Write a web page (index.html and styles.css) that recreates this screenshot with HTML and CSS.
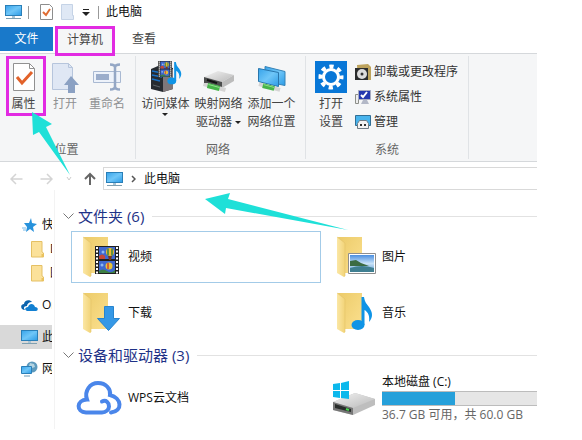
FILE: index.html
```html
<!DOCTYPE html>
<html lang="zh-CN">
<head>
<meta charset="utf-8">
<title>此电脑</title>
<link rel="stylesheet" href="styles.css">
</head>
<body>
<svg class="defs" width="0" height="0" aria-hidden="true">
  <defs>
    <linearGradient id="screen" x1="0" y1="0" x2="1" y2="1"><stop offset="0" stop-color="#36a3ea"/><stop offset=".5" stop-color="#6fc6f8"/><stop offset="1" stop-color="#2b9be6"/></linearGradient>
    <linearGradient id="back" x1="0" y1="0" x2="1" y2="1"><stop offset="0" stop-color="#eccb69"/><stop offset="1" stop-color="#fbe08f"/></linearGradient>
    <linearGradient id="flap" x1="0" y1="0" x2="1" y2="0"><stop offset="0" stop-color="#fbe7a5"/><stop offset="1" stop-color="#f2d377"/></linearGradient>
    <linearGradient id="metal" x1="0" y1="0" x2="1" y2="1"><stop offset="0" stop-color="#f3f3f3"/><stop offset="1" stop-color="#b9b9b9"/></linearGradient>
    <linearGradient id="sky" x1="0" y1="0" x2="0" y2="1"><stop offset="0" stop-color="#4b8fe0"/><stop offset=".5" stop-color="#c8e2f8"/><stop offset="1" stop-color="#5d9bd0"/></linearGradient>
  </defs>
  <symbol id="monitor" viewBox="0 0 17 16">
    <rect x=".5" y="1.5" width="16" height="10" fill="url(#screen)" stroke="#2a7fb8"/>
    <path d="M7 12h3v2H7z" fill="#a8c4d4"/><path d="M1 14.5h15" stroke="#7f9fb0"/>
  </symbol>
  <symbol id="folder" viewBox="0 0 40 44">
    <path d="M1 2h24v36H8z" fill="url(#back)"/>
    <path d="M0 2l8 6v33.500l-1 .5-7-4z" fill="url(#flap)"/><path d="M0 2l8 6v33" fill="none" stroke="#e3c269" stroke-width=".6"/>
  </symbol>
  <symbol id="minifolder" viewBox="0 0 14 17">
    <path d="M.5.500h10.500V11l1.500 1v4H.5z" fill="#fbe19a" stroke="#e5c064"/><path d="M10.500 13h2v3h-2z" fill="#eac25d"/>
  </symbol>
  <symbol id="film" viewBox="0 0 24 28">
    <path d="M0 0h24v28H0z" fill="#202020"/>
    <path d="M2 1v27M22 1v27" stroke="#fff" stroke-width="2" stroke-dasharray="2 1.500"/>
    <path d="M4 1h16v12H4zM4 15h16v12H4z" fill="#4068cf"/>
    <path d="M4 10q3-3 6 0v3H4z" fill="#c54838"/><path d="M4 25q4-3 8 0t8-1v3H4z" fill="#3d7f43"/>
    <circle cx="15" cy="6" r="4" fill="#f0b92e"/><path d="M13 2.500v7M17 2.500v7" stroke="#358447" stroke-width="1.500"/><path d="M13 10h4l-1 4h-2z" fill="#753820"/>
    <circle cx="14" cy="20" r="3.500" fill="#e9c438"/><path d="M13 17v6" stroke="#d04132" stroke-width="1.500"/><circle cx="8" cy="6" r="1.500" fill="#8fb8f0"/><circle cx="7" cy="19" r="1.500" fill="#8fb8f0"/>
  </symbol>
  <symbol id="note" viewBox="0 0 22 34">
    <ellipse cx="7" cy="28" rx="6.500" ry="5" fill="#0f94e6"/>
    <path d="M10.500 0h2.500c1 6 3 7 5 10 4 6 4 10 0 15 1-6-1-10-4.500-12v15h-3z" fill="#0f94e6"/>
  </symbol>
  <symbol id="cable" viewBox="0 0 24 9">
    <path d="M1 1l22 6" stroke="#d4d4d4" stroke-width="4"/><path d="M5 2.500l12 3" stroke="#46b449" stroke-width="5"/><path d="M6 1.500l11 3" stroke="#91df8d"/>
  </symbol>
</svg>

<div class="window">
  <header class="titlebar">
    <svg class="t-pc" width="17" height="16"><use href="#monitor"/></svg>
    <span class="rule"></span>
    <button class="quick" aria-label="属性"><svg width="13" height="16" viewBox="0 0 13 16"><path d="M.5.500h9l3 3v12H.5z" fill="#fff" stroke="#8d8d8d"/><path d="M3 8l3 3 4-6" fill="none" stroke="#e06d33" stroke-width="2"/></svg></button>
    <button class="quick" aria-label="新建文件夹"><svg width="13" height="16" viewBox="0 0 13 16"><path d="M.5.500h11v11h1v4H.5z" fill="#dfe8f5" stroke="#c5d3e6"/></svg></button>
    <button class="quick" aria-label="自定义快速访问工具栏"><svg width="8" height="8" viewBox="0 0 8 8"><path d="M1 1.500h6" stroke="#222"/><path d="M0 4h8L4 8z" fill="#222"/></svg></button>
    <span class="rule"></span>
    <span class="title">此电脑</span>
  </header>

  <nav class="tabs">
    <button class="tab file">文件</button>
    <button class="tab current">计算机</button>
    <button class="tab">查看</button>
  </nav>

  <section class="ribbon">
    <div class="group place">
      <div class="tools">
        <button class="tool marked"><svg width="22" height="32" viewBox="0 0 22 32"><path d="M.5 2.500h16l5 5v22H.5z" fill="#fff" stroke="#919191"/><path d="M16.500 2.500v5h5" fill="none" stroke="#919191"/><path d="M4 16l5 6 10-11" fill="none" stroke="#e2622a" stroke-width="3"/></svg><span>属性</span></button>
        <button class="tool off"><svg width="28" height="32" viewBox="0 0 28 32"><path d="M1.500 2.500h16l4 4v22h-20z" fill="#dfe7f4" stroke="#b6c5dc"/><path d="M17.500 2.500v4h4" fill="none" stroke="#b6c5dc"/><path d="M20 15l8 9h-4v8h-7v-8h-4z" fill="#8ba1c3"/></svg><span>打开</span></button>
        <button class="tool off"><svg width="28" height="32" viewBox="0 0 28 32"><path d="M.5 10.500h27v11H.5z" fill="#edf2fa" stroke="#a9b9d2"/><path d="M3 13h13v6H3z" fill="#9badcb"/><path d="M17 3.500q5 0 5 3v19q0 3-5 3M27 3.500q-5 0-5 3M22 25.500q0 3 5 3" fill="none" stroke="#94a7c5" stroke-width="2.500"/></svg><span>重命名</span></button>
      </div>
      <div class="caption">位置</div>
    </div>
    <div class="group network">
      <div class="tools">
        <button class="tool"><svg width="32" height="32" viewBox="0 0 32 32"><path d="M1 8l7-3 15 2v21l-10 3-12-3z" fill="#262b31"/><path d="M13 11l10-3v20l-10 3z" fill="#7d777a"/><path d="M2 10l10 2M2 14l10 2M2 18l8 2" stroke="#1970c5" stroke-width="1.500"/><path d="M3 24l7 2" stroke="#5c646b"/><use href="#film" x="7" y="0" width="16" height="16"/><use href="#note" x="17" y="1" width="15" height="23"/></svg><span>访问媒体<i class="drop"></i></span></button>
        <button class="tool"><svg width="34" height="32" viewBox="0 0 34 32"><path d="M2 16L16 10l16 4-12 7z" fill="url(#metal)"/><path d="M2 16l18 5v6L2 22z" fill="#4b4d4d"/><path d="M20 21l12-7v6l-12 7z" fill="#bcbcbc"/><path d="M5 19l10 3" stroke="#111" stroke-width="2"/><use href="#cable" x="0" y="22" width="25" height="9"/></svg><span>映射网络<br>驱动器 <i class="drop"></i></span></button>
        <button class="tool"><svg width="30" height="32" viewBox="0 0 30 32"><path d="M8 5.500l20 5v14l-20-4z" fill="url(#screen)" stroke="#3683b7"/><path d="M1.500 7.500l20 4v14l-20-5z" fill="url(#screen)" stroke="#2876ad"/><use href="#cable" x="1" y="22" width="23" height="9"/></svg><span>添加一个<br>网络位置</span></button>
      </div>
      <div class="caption">网络</div>
    </div>
    <div class="group system">
      <div class="tools">
        <button class="tool"><svg width="32" height="32" viewBox="0 0 32 32"><path d="M0 0h32v32H0z" fill="#0877d7"/><circle cx="16" cy="16" r="7.500" fill="none" stroke="#fff" stroke-width="3"/><circle cx="16" cy="16" r="10.500" fill="none" stroke="#fff" stroke-width="4" stroke-dasharray="4.250 4" stroke-dashoffset="2"/></svg><span>打开<br>设置</span></button>
        <div class="list">
          <button class="line"><svg width="16" height="16" viewBox="0 0 16 16"><path d="M2 1l11-1 3 3v13H3z" fill="#bda35d"/><path d="M0 4h13v12H0z" fill="#2b2d2e"/><circle cx="7" cy="10" r="5" fill="#ddd"/><circle cx="7" cy="10" r="1.500" fill="#333"/></svg>卸载或更改程序</button>
          <button class="line"><svg width="16" height="16" viewBox="0 0 16 16"><path d="M.5 5.500h3v9h-3z" fill="#eee" stroke="#8d8f89"/><path d="M3.500 1.500h12v9h-12z" fill="#2439ae" stroke="#a6aac0"/><path d="M6 6l2 2 4-5" fill="none" stroke="#fff" stroke-width="2"/><path d="M8 11h4l2 4H6z" fill="#b3b8c7"/></svg>系统属性</button>
          <button class="line"><svg width="16" height="16" viewBox="0 0 16 16"><path d="M.5 1.500h15v10H.5z" fill="#48b4ed" stroke="#326f95"/><path d="M4.500 6.500h7l2 3v5h-11v-5z" fill="#f3f3f3" stroke="#6f7c86"/><path d="M5 11h2M9 11h2" stroke="#333" stroke-width="2"/></svg>管理</button>
        </div>
      </div>
      <div class="caption">系统</div>
    </div>
  </section>

  <nav class="address">
    <button class="step" aria-label="后退"><svg width="13" height="12" viewBox="0 0 13 12"><path d="M12.500 6H1M6 1L1 6l5 5" fill="none" stroke="#d4d4d4" stroke-width="1.500"/></svg></button>
    <button class="step" aria-label="前进"><svg width="13" height="12" viewBox="0 0 13 12"><path d="M.5 6H12M7 1l5 5-5 5" fill="none" stroke="#d4d4d4" stroke-width="1.500"/></svg></button>
    <button class="step" aria-label="最近位置"><svg width="6" height="6" viewBox="0 0 6 6"><path d="M1 1l2 3 2-3" fill="none" stroke="#ccc"/></svg></button>
    <button class="step" aria-label="上移"><svg width="12" height="13" viewBox="0 0 12 13"><path d="M6 13V1.500M1 7l5-5 5 5" fill="none" stroke="#666" stroke-width="2"/></svg></button>
    <div class="path">
      <svg width="17" height="16"><use href="#monitor"/></svg>
      <svg width="5" height="8" viewBox="0 0 5 8"><path d="M1 1l3 3-3 3" fill="none" stroke="#555" stroke-width="1.500"/></svg>
      <span>此电脑</span>
    </div>
  </nav>

  <div class="body">
    <aside class="sidebar">
      <a class="node" href="#"><svg width="16" height="16" viewBox="0 0 16 16"><path d="M9 1l1 5 5 1-4 3 1 5-4-3-4 3 1-5-3-4 5 0z" fill="#2792dc"/><path d="M0 11h4M1 13h3" stroke="#79b9e7"/></svg>快速访问</a>
      <a class="node sub" href="#"><svg width="14" height="17"><use href="#minifolder"/></svg>D</a>
      <a class="node sub" href="#"><svg width="14" height="17"><use href="#minifolder"/></svg>图</a>
      <a class="node root" href="#"><svg width="17" height="16" viewBox="0 0 17 16"><path d="M1 12C-1 9 1 7 3 7c0-4 6-5 8-2-3 0-5 2-5 4-3 0-4 2-2 4H3z" fill="#0b63ad"/><path d="M6 14c-3-1-2-4 1-4 1-4 6-4 7 0 4 0 3 4 1 4z" fill="#1280d2"/></svg>OneDrive</a>
      <a class="node root selected" href="#"><svg width="17" height="16"><use href="#monitor"/></svg>此电脑</a>
      <a class="node root" href="#"><svg width="17" height="16" viewBox="0 0 17 16"><circle cx="11" cy="6" r="5.500" fill="#5d9abd"/><path d="M9 2l4 1 1 3-3 1-3-2z" fill="#b4d4e2"/><path d="M.5 5.500h10v7H.5z" fill="url(#screen)" stroke="#2a7fb8"/><path d="M3 15h6" stroke="#6d9ab5"/></svg>网络</a>
    </aside>
    <main class="content">
      <h2><svg width="11" height="8" viewBox="0 0 11 8"><path d="M.5 1.500l5 5 5-5" fill="none" stroke="#777"/></svg>文件夹 (6)</h2>
      <div class="items">
        <a class="item focus" href="#"><svg width="40" height="44"><use href="#folder"/><use href="#film" x="12" y="11" width="24" height="28"/></svg>视频</a>
        <a class="item" href="#"><svg width="40" height="44"><use href="#folder"/><path d="M11.500 18.500h27v20h-27z" fill="#fff" stroke="#8e8e8e"/><path d="M13 20h24v17H13z" fill="url(#sky)"/><path d="M13 26l6-1 5 3 8 3H13z" fill="#3b6b43"/><path d="M13 33q12-4 24 0v4H13z" fill="#3f7f91"/></svg>图片</a>
        <a class="item" href="#"><svg width="40" height="44"><use href="#folder"/><path d="M21.500 15.500h9v12h6l-11 12-11-12h7z" fill="#3598e6" stroke="#2784ce"/></svg>下载</a>
        <a class="item" href="#"><svg width="40" height="44"><use href="#folder"/><use href="#note" x="14" y="6" width="22" height="34"/></svg>音乐</a>
      </div>
      <h2><svg width="11" height="8" viewBox="0 0 11 8"><path d="M.5 1.500l5 5 5-5" fill="none" stroke="#777"/></svg>设备和驱动器 (3)</h2>
      <div class="items drives">
        <a class="item cloud" href="#"><svg width="46" height="34" viewBox="0 0 46 34"><path d="M26 20.500c4-2 7 1 7 5 0 3-3 6-7 6H10C0 31 0 19 11 18.500 8 10 14 2 22 2c8 0 13 6 12 12 12 3 13 16 1 17.500" fill="none" stroke="#4a86ea" stroke-width="4" stroke-linecap="round"/></svg>WPS云文档</a>
        <a class="item drive" href="#">
          <svg width="42" height="34" viewBox="0 0 42 34"><path d="M0 21l22-9 20 6v6L20 34 0 29z" fill="#bebebe"/><path d="M0 21l22-9 20 6-22 9z" fill="url(#metal)"/><path d="M0 21l20 6v7L0 29z" fill="#777"/><path d="M2 23l16 5v3L2 27z" fill="#292d2b"/><path d="M13 28l3 1" stroke="#49d84f" stroke-width="2"/><path d="M0 3l7-1v7H0zM8 2l8-2v9H8zM0 10h7v7l-7-1zM8 10h8v8l-8-1z" fill="#0cb8ec"/></svg>
          <span class="usage"><label for="disk">本地磁盘 (C:)</label><progress id="disk" value="47" max="100"></progress><small>36.7 GB 可用，共 60.0 GB</small></span>
        </a>
      </div>
    </main>
  </div>
</div>

<svg class="arrows" width="360" height="240" viewBox="0 0 360 240" aria-hidden="true">
  <path d="M32 112l20 12-6 3 24 48-31-43-6 3zM205 199l25-6-2 6 120 31-122-22-1 6z" fill="#1ee0d8"/>
</svg>
</body>
</html>
```
FILE: styles.css
```css
* { box-sizing: border-box; }
body {
  margin: 0;
  background: #fff;
  color: #111;
  font: 12px/18px "Open Sans", "Noto Sans CJK SC", sans-serif;
}
button {
  margin: 0;
  padding: 0;
  border: 0;
  background: none;
  color: inherit;
  font: inherit;
}
a { color: inherit; text-decoration: none; }
svg { display: block; flex: none; }
.defs { position: absolute; }
.window { margin-right: 45px; }

.titlebar { display: flex; align-items: center; height: 24px; padding-left: 5px; }
.rule { width: 1px; height: 13px; background: #999; }
.t-pc { margin-right: 6px; }
.rule + .quick { margin-left: 11px; }
.quick { margin-right: 8px; }
.quick + .rule { margin-right: 7px; }

.tabs { display: flex; align-items: center; height: 29px; }
.tab { height: 24px; padding: 0 12px; color: #444; }
.tab.file { width: 53px; background: #1979ca; color: #fff; }
.tab.current {
  position: relative;
  height: 30px;
  margin: 5px 5px 0 2px;
  padding: 0 9px 2px;
  border: 3px solid #e22be2;
  background: #f5f6f7;
}

.ribbon {
  display: flex;
  height: 109px;
  padding: 2px 0;
  border: solid #d5d8db;
  border-width: 1px 0;
  background: #f5f6f7;
}
.group {
  display: flex;
  flex-direction: column;
  border-right: 1px solid #e0e3e6;
}
.place { width: 136px; padding-left: 6px; }
.network { width: 170px; padding-left: 3px; }
.system { width: 163px; padding-left: 8px; }
.tools { display: flex; align-items: flex-start; }
.tool {
  display: flex;
  flex-direction: column;
  align-items: center;
  gap: 2px;
  padding: 2px 0 0;
  border: 3px solid transparent;
  color: #444;
  white-space: nowrap;
}
.place .tool { width: 38px; }
.place .tool:last-child { width: 46px; }
.place .tool.marked { width: 40px; padding-right: 5px; border-color: #e22be2; }
.network .tool { width: 53px; border-inline: 0; }
.system .tool { width: 34px; border-inline: 0; }
.off { color: #8f9193; }
.place .off { color: #8f9193; }
.drop {
  display: inline-block;
  border: 3px solid transparent;
  border-top-color: #222;
  border-bottom: 0;
  vertical-align: middle;
}
.network .tool:first-child .drop { display: block; width: 6px; margin: 0 auto; }
.list { display: grid; gap: 7px; padding: 7px 0 0 7px; }
.line { display: flex; align-items: center; gap: 3px; color: #333; white-space: nowrap; }
.caption { margin-top: auto; padding-right: 8px; color: #666; text-align: center; }

.address { display: flex; align-items: center; height: 23px; margin-top: 5px; padding-left: 10px; }
.step { margin-right: 17px; }
.step:nth-child(2) { margin-right: 13px; }
.step:nth-child(3) { margin-right: 12px; }
.step:nth-child(4) { margin-right: 7px; }
.path {
  display: flex;
  flex: 1;
  align-items: center;
  gap: 8px;
  height: 23px;
  padding-left: 2px;
  border: 1px solid #d9d9d9;
  border-right: 0;
}

.body { display: flex; }
.sidebar { width: 55px; padding: 23px 2px 0 0; border-right: 1px solid #f3f3f3; }
.node {
  display: flex;
  align-items: center;
  gap: 4px;
  height: 24px;
  padding-left: 21px;
  overflow: hidden;
  white-space: nowrap;
}
.node:first-child { padding-left: 22px; }
.sub { gap: 5px; padding-left: 31px; }
.root { margin-top: 8px; }
.selected { background: #d9d9d9; }

.content { flex: 1; min-width: 0; padding: 15px 0 0 8px; }
h2 {
  display: flex;
  align-items: center;
  gap: 4px;
  margin: 0 0 4px;
  color: #1e3287;
  font-size: 15px;
  font-weight: 400;
  line-height: 22px;
}
h2::after { flex: 1; height: 1px; margin-left: 4px; background: #e2e2e2; content: ""; }
.items {
  display: grid;
  grid-template-columns: 250px minmax(0, 1fr);
  gap: 4px;
  margin: 0 0 5px 8px;
}
.drives { margin-top: 6px; }
.item {
  display: flex;
  align-items: center;
  gap: 5px;
  height: 52px;
  padding-left: 11px;
  border: 1px solid transparent;
}
.focus { border-color: #a3cbe8; }
.item.cloud { padding-left: 4px; gap: 6px; }
.item.drive { gap: 7px; padding: 0 0 0 7px; border-right: 0; }
.usage { display: grid; flex: 1; min-width: 0; }
.usage small { color: #666; font-size: 12px; white-space: nowrap; }
progress {
  width: 100%;
  height: 15px;
  border: solid #bcbcbc;
  border-width: 1px 0;
  background: #e6e6e6;
  appearance: none;
}
progress::-webkit-progress-bar { background: #e6e6e6; }
progress::-webkit-progress-value { background: #26a0da; }

.arrows { position: absolute; top: 0; left: 0; pointer-events: none; }
```
